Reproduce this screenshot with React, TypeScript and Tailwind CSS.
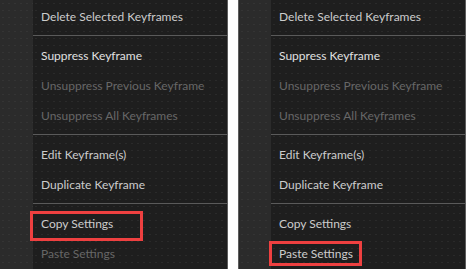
type Item = { label: string; disabled?: boolean; bright?: boolean } | "sep";

const ITEMS: Item[] = [
  { label: "Delete Selected Keyframes" },
  "sep",
  { label: "Suppress Keyframe", bright: true },
  { label: "Unsuppress Previous Keyframe", disabled: true },
  { label: "Unsuppress All Keyframes", disabled: true },
  "sep",
  { label: "Edit Keyframe(s)" },
  { label: "Duplicate Keyframe" },
  "sep",
  { label: "Copy Settings" },
  { label: "Paste Settings" },
];

function Menu({ side }: { side: "left" | "right" }) {
  const pasteEnabled = side === "right";
  return (
    <div
      className={
        side === "left"
          ? "flex h-full w-[228px] border-r border-[#5c5c5c]"
          : "flex h-full w-[228px] border-x border-[#5c5c5c]"
      }
    >
      <div
        className={
          side === "left"
            ? "h-full w-[33px] bg-[#2b2b2b] bg-[radial-gradient(circle,#343434_0.8px,transparent_1px)] bg-[length:6px_7px]"
            : "h-full w-[32px] bg-[#2b2b2b] bg-[radial-gradient(circle,#343434_0.8px,transparent_1px)] bg-[length:6px_7px]"
        }
      />
      <div className="flex h-full flex-1 flex-col bg-[#1e1e1e] bg-[radial-gradient(circle,#2a2a2a_0.8px,transparent_1px)] bg-[length:6px_7px] pt-[1px]">
        {ITEMS.map((item, i) => {
          if (item === "sep") {
            return (
              <div key={i} className="pt-[4px] pb-[4px]">
                <div className="h-px bg-[#5a5a5a]" />
              </div>
            );
          }
          const disabled = item.label === "Paste Settings" ? !pasteEnabled : item.disabled;
          const color = disabled ? "text-[#676767]" : item.bright ? "text-[#e0e0e0]" : "text-[#cccccc]";
          return (
            <div key={i} className={`relative flex h-[30px] shrink-0 items-center pl-2 pt-[2px] ${color}`}>
              <span className="whitespace-nowrap">{item.label}</span>
              {side === "left" && item.label === "Copy Settings" && (
                <div className="absolute left-[-3px] top-[3px] h-[30px] w-[113px] border-[3px] border-[#ee4040]" />
              )}
              {side === "right" && item.label === "Paste Settings" && (
                <div className="absolute left-[-2px] top-[3px] h-[25px] w-[93px] border-[3px] border-[#ee4040]" />
              )}
            </div>
          );
        })}
      </div>
    </div>
  );
}

export default function App() {
  return (
    <div className="flex h-[269px] w-[467px] gap-[10px] overflow-hidden bg-white font-['Lato','Noto_Sans',sans-serif] text-[12px]">
      <Menu side="left" />
      <Menu side="right" />
    </div>
  );
}
